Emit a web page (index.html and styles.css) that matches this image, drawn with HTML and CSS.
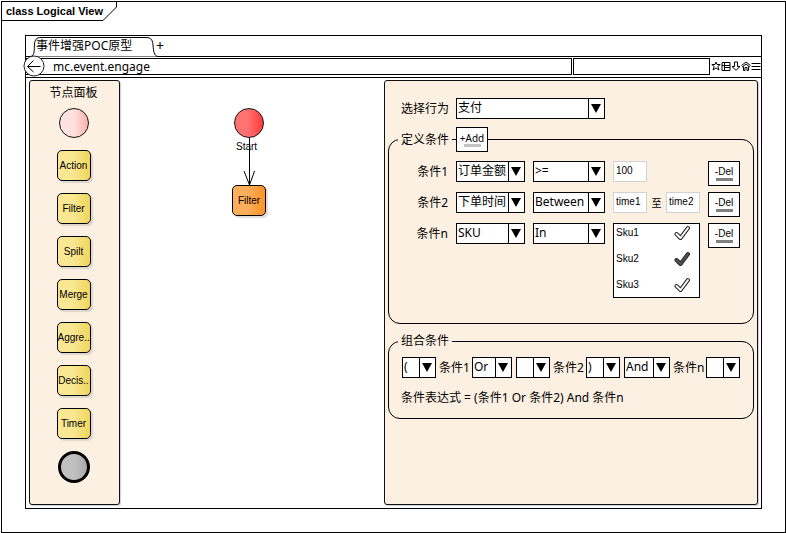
FILE: index.html
```html
<!DOCTYPE html>
<html lang="zh-CN">
<head>
<meta charset="utf-8">
<title>事件增强POC原型</title>
<link rel="stylesheet" href="styles.css">
</head>
<body>
<div class="diagram">
  <h1 class="diagram-title">
    <svg class="diagram-outline" width="116" height="20" viewBox="0 0 116 20" aria-hidden="true"><path d="M0 18.500H101L114.500 5V0" fill="none" stroke="#000"/></svg>
    <span class="diagram-name">class Logical View</span>
  </h1>

  <div class="browser">
    <div class="tabs">
      <a class="tab" href="#">
        <svg class="tab-outline" width="130" height="21" viewBox="0 0 130 21" aria-hidden="true"><path d="M0 20.500C4 19 3 14 3.500 8C4 4 5 1.500 10 1.500H115C121 1.500 121.500 5 122 9C122.500 15 123 20 127 20.500" fill="#fff" stroke="#000"/></svg>
        <span class="tab-name">事件增强POC原型</span>
      </a>
      <button class="tab-add" type="button" aria-label="新标签页">+</button>
    </div>

    <div class="toolbar">
      <button class="back" type="button" aria-label="后退">
        <svg width="22" height="22" viewBox="0 0 22 22"><circle cx="11" cy="11" r="10" fill="#fff" stroke="#222"/><path d="M17.500 11.500H4.500M10.500 5.500L4.500 11.500L10.500 17" fill="none" stroke="#000"/></svg>
      </button>
      <input class="address" type="text" value="mc.event.engage" aria-label="地址">
      <input class="search" type="text" aria-label="搜索">
      <div class="tools">
        <button type="button" aria-label="收藏"><svg width="10" height="10" viewBox="0 0 10 10"><path d="M5 1L6 3.500H9.200L6.800 5.500L8 9L5 7L2 9L3.200 5.500L.8 3.500H4Z"/></svg></button>
        <button type="button" aria-label="书签"><svg width="10" height="10" viewBox="0 0 10 10"><path d="M1 1.500H9V9.500H1ZM3.500 1.500V9.500M1 4.500H9M3.500 6.500H9"/></svg></button>
        <button type="button" aria-label="下载"><svg width="10" height="10" viewBox="0 0 10 10"><path d="M3.500 1H6.500V5.500H9L5 9.300L1 5.500H3.500Z"/></svg></button>
        <button type="button" aria-label="主页"><svg width="10" height="10" viewBox="0 0 10 10"><path d="M.5 4.500L5 1L9.500 4.500M1 6.200L5 3L9 6.200M2.500 5.500V9.500H4V6.500H6V9.500H7.500V5.500"/></svg></button>
        <button type="button" aria-label="菜单"><svg width="10" height="10" viewBox="0 0 10 10"><path d="M.5 2.500H9.500M.5 5.500H9.500M.5 8.500H9.500"/></svg></button>
      </div>
    </div>

    <main class="workspace">
      <aside class="palette">
        <h2 class="palette-title">节点面板</h2>
        <button class="dot dot-start" type="button" aria-label="Start"></button>
        <button class="node" type="button">Action</button>
        <button class="node" type="button">Filter</button>
        <button class="node" type="button">Spilt</button>
        <button class="node" type="button">Merge</button>
        <button class="node" type="button">Aggre..</button>
        <button class="node" type="button">Decis..</button>
        <button class="node" type="button">Timer</button>
        <button class="dot dot-end" type="button" aria-label="End"></button>
      </aside>

      <section class="canvas">
        <span class="dot dot-active"></span>
        <svg class="flow" width="12" height="48" viewBox="0 0 12 48" aria-hidden="true"><path d="M6.500 0V47M1 33L6.500 47L11.500 33" fill="none" stroke="#000"/></svg>
        <span class="flow-label">Start</span>
        <button class="node node-active" type="button">Filter</button>
      </section>

      <form class="settings">
        <div class="behavior">
          <label for="behavior">选择行为</label>
          <span class="select select-wide"><select id="behavior"><option>支付</option></select></span>
        </div>

        <fieldset class="group group-define">
          <legend class="legend-action"><span class="legend-text">定义条件</span><span class="dash"></span><button class="action action-add" type="button">+Add</button></legend>
          <div class="condition">
            <label for="field1">条件1</label>
            <span class="select"><select id="field1"><option>订单金额</option></select></span>
            <span class="select"><select aria-label="条件1 运算符"><option>&gt;=</option></select></span>
            <div class="values"><input class="value" type="text" value="100" aria-label="金额"></div>
            <button class="action" type="button">-Del</button>
          </div>
          <div class="condition">
            <label for="field2">条件2</label>
            <span class="select"><select id="field2"><option>下单时间</option></select></span>
            <span class="select"><select aria-label="条件2 运算符"><option>Between</option></select></span>
            <div class="values">
              <input class="value" type="text" value="time1" aria-label="开始时间">
              <span class="to">至</span>
              <input class="value" type="text" value="time2" aria-label="结束时间">
            </div>
            <button class="action" type="button">-Del</button>
          </div>
          <div class="condition">
            <label for="fieldn">条件n</label>
            <span class="select"><select id="fieldn"><option>SKU</option></select></span>
            <span class="select"><select aria-label="条件n 运算符"><option>In</option></select></span>
            <div class="sku-list">
              <label class="sku"><input type="checkbox"><span>Sku1</span><svg class="tick" width="17" height="16" viewBox="0 0 17 16"><path class="tick-edge" d="M2.500 9L6.500 13L14 3"/><path class="tick-core" d="M2.500 9L6.500 13L14 3"/></svg></label>
              <label class="sku"><input type="checkbox" checked><span>Sku2</span><svg class="tick" width="17" height="16" viewBox="0 0 17 16"><path class="tick-edge" d="M2.500 9L6.500 13L14 3"/><path class="tick-core" d="M2.500 9L6.500 13L14 3"/></svg></label>
              <label class="sku"><input type="checkbox"><span>Sku3</span><svg class="tick" width="17" height="16" viewBox="0 0 17 16"><path class="tick-edge" d="M2.500 9L6.500 13L14 3"/><path class="tick-core" d="M2.500 9L6.500 13L14 3"/></svg></label>
            </div>
            <button class="action" type="button">-Del</button>
          </div>
        </fieldset>

        <fieldset class="group group-combine">
          <legend>组合条件</legend>
          <div class="formula">
            <span class="select select-paren"><select aria-label="左括号"><option>(</option></select></span>
            <span class="term">条件1</span>
            <span class="select select-or"><select aria-label="连接 1"><option>Or</option></select></span>
            <span class="select select-paren select-next"><select aria-label="括号 2"><option></option></select></span>
            <span class="term">条件2</span>
            <span class="select select-paren"><select aria-label="右括号"><option>)</option></select></span>
            <span class="select select-and select-next"><select aria-label="连接 2"><option>And</option></select></span>
            <span class="term">条件n</span>
            <span class="select select-paren"><select aria-label="括号 4"><option></option></select></span>
          </div>
          <p class="expression">条件表达式 = (条件1 Or 条件2) And 条件n</p>
        </fieldset>
      </form>
    </main>
  </div>
</div>
</body>
</html>
```
FILE: styles.css
```css
* { box-sizing: border-box; }

body {
  margin: 0;
  padding: 1px 0 0 1px;
  min-height: 100vh;
  display: flex;
  background: #fff;
  color: #000;
  font: 12px/18px "Noto Sans", "Noto Sans CJK SC", sans-serif;
}

h1, h2, p { margin: 0; font-size: 12px; font-weight: normal; }

button, input, select {
  margin: 0;
  padding: 0;
  border: 0;
  border-radius: 0;
  background: none;
  color: inherit;
  font: inherit;
  appearance: none;
}

.diagram {
  flex: 1;
  min-width: 0;
  display: flex;
  flex-direction: column;
  padding: 0 23px 23px;
  border: 1px solid #000;
}

.diagram-title {
  position: relative;
  height: 33px;
  margin: 0 -23px;
  padding-left: 4px;
  font: bold 11px/18px "Liberation Sans", sans-serif;
}

.diagram-outline { position: absolute; top: 0; left: 0; }

.browser {
  flex: 1;
  display: flex;
  flex-direction: column;
  border: 1px solid #000;
}

.tabs {
  display: flex;
  align-items: center;
  height: 21px;
  padding-left: 5px;
  border-bottom: 1px solid #000;
}

.tab {
  position: relative;
  width: 123px;
  height: 20px;
  padding-left: 5px;
  color: inherit;
  line-height: 20px;
  text-decoration: none;
}

.tab-outline { position: absolute; top: 0; left: 0; }
.tab-name { position: relative; }
.tab-add { position: relative; width: 12px; font-size: 14px; }

.toolbar {
  position: relative;
  display: flex;
  height: 21px;
  padding-top: 1px;
  border-bottom: 1px solid #000;
}

.back {
  position: absolute;
  top: -2px;
  left: -3px;
  width: 22px;
  height: 22px;
}

.back svg, .tools svg { display: block; }

.address, .search { height: 17px; border: 1px solid #000; }
.address { flex: 1; min-width: 0; padding-left: 27px; border-left: 0; }
.search { width: 137px; margin-left: 1px; }

.tools { display: flex; align-items: center; height: 16px; padding: 0 0 0 1px; }
.tools button { width: 10px; height: 10px; }
.tools path { fill: none; stroke: #000; }

.workspace { flex: 1; display: flex; padding: 2px 3px 3px; }

.palette, .settings {
  border: 1px solid #111;
  border-radius: 3px;
  background: #fbf0e2;
  box-shadow: 1px 1px 1px #ccd0da;
}

.palette {
  width: 91px;
  display: flex;
  flex-direction: column;
  align-items: center;
  gap: 12px;
  padding: 3px 2px 0 0;
}

.palette-title { margin-bottom: -6px; }

.dot { width: 30px; height: 30px; border: 1px solid #111; border-radius: 50%; }
.dot-start { background: linear-gradient(90deg, #ffe2e0 50%, #ffb0a8); }
.dot-end { width: 32px; height: 32px; border-width: 3px; border-color: #000; background: linear-gradient(90deg, #c0c0c0 50%, #a8a8a8); }

.node {
  width: 34px;
  height: 31px;
  border: 1px solid #000;
  border-radius: 5px;
  background: linear-gradient(90deg, #f9e793 45%, #f1d65c);
  box-shadow: 2px 2px 1px #ded5cc;
  font: 10px/28px "Liberation Sans", sans-serif;
  white-space: nowrap;
}

.canvas { position: relative; flex: 1; }
.dot-active { position: absolute; top: 28px; left: 114px; background: linear-gradient(90deg, #ff7272 45%, #ff3c3c); }
.flow { position: absolute; top: 58px; left: 123px; }
.flow-label { position: absolute; top: 58px; left: 116px; font: 10px/18px "Liberation Sans", sans-serif; }
.node-active { position: absolute; top: 105px; left: 112px; background: linear-gradient(90deg, #ffae5c 45%, #ff9226); box-shadow: 2px 2px 1px #ddd; }

.settings { width: 374px; padding: 17px 3px 0; }

.behavior { display: flex; align-items: center; gap: 8px; padding-left: 13px; }
.behavior label { width: 47px; white-space: nowrap; }

.select {
  position: relative;
  display: flex;
  height: 21px;
  border: 1px solid #000;
  background: #fff;
}

.select select { flex: 1; min-width: 0; padding: 0 16px 2px 1px; }

.select::before {
  content: "";
  position: absolute;
  top: 0;
  right: 15px;
  bottom: 0;
  border-left: 1px solid #000;
}

.select::after {
  content: "";
  position: absolute;
  top: 5px;
  right: 3px;
  width: 10px;
  height: 9px;
  background: #000;
  clip-path: polygon(0 0, 100% 0, 50% 100%);
  pointer-events: none;
}

.select-wide { width: 149px; }

.group {
  min-width: 0;
  margin: 8px 0 0;
  padding: 0 9px;
  border: 1px solid #000;
  border-radius: 12px;
}

.group legend { padding: 0 3px; }
.group .legend-action { display: flex; align-items: center; padding-right: 0; }
.legend-text { width: 51px; }
.dash { width: 4px; border-top: 1px solid #000; }
.group-define { padding: 9px 12px 25px; }
.group-define legend { margin-left: -3px; }

.action {
  height: 25px;
  border: 1px solid #000;
  background: #fff;
  font: 10px/12px "Liberation Sans", sans-serif;
}

.action::after {
  content: "";
  display: block;
  width: 17px;
  height: 3px;
  margin: 0 auto;
  background: #808080;
}

.action-add { width: 32px; font-family: "Noto Sans", sans-serif; }
.action-add::after { background: #c4c4c4; }

.condition {
  display: grid;
  grid-template-columns: 47px 69px 72px 87px 32px;
  align-items: start;
  gap: 8px;
}

.condition + .condition { margin-top: 6px; }
.condition > label { line-height: 21px; text-align: right; }

.values { display: flex; align-items: center; justify-content: space-between; }

.value {
  width: 34px;
  height: 21px;
  padding: 0 0 2px 2px;
  border: 1px solid #d2d2d2;
  background: #fff;
  font: 10px/18px "Liberation Sans", sans-serif;
}

.to { font-size: 10px; }

.sku-list { padding: 0 8px 5px 2px; border: 1px solid #000; background: #fff; }

.sku {
  position: relative;
  display: flex;
  justify-content: space-between;
  height: 26px;
  font: 10px/18px "Liberation Sans", sans-serif;
}

.sku:last-child { height: 16px; }
.sku input { position: absolute; inset: 0; opacity: 0; }
.tick { margin-top: 1px; }
.tick path { fill: none; stroke-linecap: round; stroke-linejoin: round; }
.tick-edge { stroke: #222; stroke-width: 4; }
.tick-core { stroke: #fff; stroke-width: 2; }
.sku input:checked ~ .tick .tick-core { stroke: #555; }

.group-combine { padding: 7px 13px 11px; }
.group-combine legend { margin-left: -4px; }

.formula { display: flex; align-items: center; }
.term { width: 36px; padding-left: 3px; white-space: nowrap; }
.select-paren { width: 34px; }
.select-or { width: 40px; }
.select-and { width: 46px; }
.select-next { margin-left: 4px; }

.expression { margin: 11px 0 0 -1px; }
```
